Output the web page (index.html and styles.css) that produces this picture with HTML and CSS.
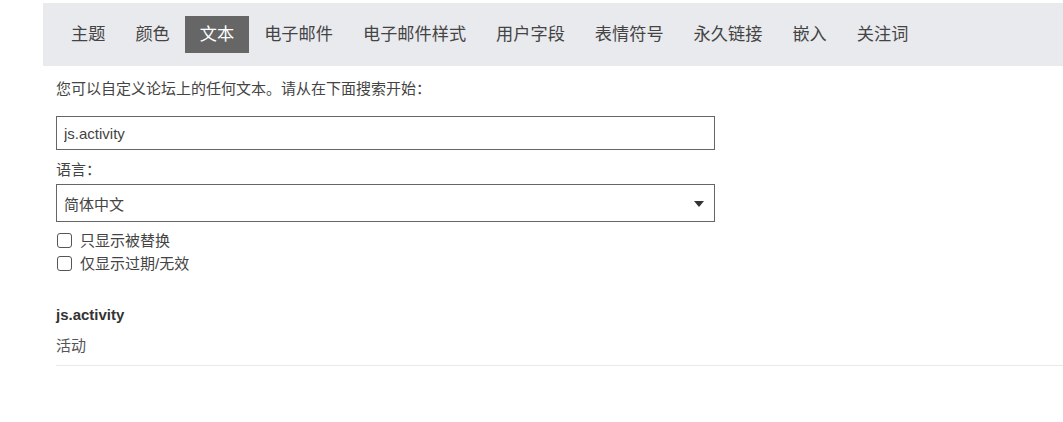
FILE: index.html
```html
<!DOCTYPE html>
<html lang="zh-CN">
<head>
<meta charset="utf-8">
<title>文本</title>
<link rel="stylesheet" href="styles.css">
</head>
<body>
<div class="page">
  <nav class="nav">
    <a class="tab">主题</a>
    <a class="tab">颜色</a>
    <a class="tab active">文本</a>
    <a class="tab">电子邮件</a>
    <a class="tab">电子邮件样式</a>
    <a class="tab">用户字段</a>
    <a class="tab">表情符号</a>
    <a class="tab">永久链接</a>
    <a class="tab">嵌入</a>
    <a class="tab">关注词</a>
  </nav>
  <main class="content">
    <p class="intro">您可以自定义论坛上的任何文本。请从在下面搜索开始：</p>
    <input class="search" type="text" value="js.activity">
    <label class="field-label">语言：</label>
    <div class="select-wrap">
      <div class="select">简体中文</div>
      <svg class="caret" width="10" height="6" viewBox="0 0 10 6"><path d="M0 0H10L5 6Z" fill="#333"/></svg>
    </div>
    <div class="checks">
      <label class="check"><input type="checkbox" class="box"><span>只显示被替换</span></label>
      <label class="check"><input type="checkbox" class="box"><span>仅显示过期/无效</span></label>
    </div>
    <div class="result">
      <h3 class="key">js.activity</h3>
      <div class="value">活动</div>
    </div>
  </main>
</div>
</body>
</html>
```
FILE: styles.css
```css
* { box-sizing: border-box; }
body {
  margin: 0;
  background: #fff;
  font-family: "Liberation Sans", "Noto Sans CJK SC", sans-serif;
  color: #333;
}
.page {
  padding: 3px 0 0 43px;
}
.nav {
  display: flex;
  background: #e9eaee;
  padding: 13px 13px;
}
.tab {
  font-size: 17.2px;
  line-height: 25px;
  padding: 6px 15px;
  color: #444;
  white-space: nowrap;
}
.tab.active {
  background: #666;
  color: #fff;
}
.content {
  padding: 13px 0 0 13px;
  display: flex;
  flex-direction: column;
  align-items: flex-start;
}
.intro {
  margin: 0;
  font-size: 15px;
  line-height: 20px;
  color: #444;
}
.search {
  margin-top: 17px;
  width: 659px;
  height: 34px;
  border: 1px solid #666;
  border-radius: 0;
  padding: 0 7px;
  font-family: "Liberation Sans", "Noto Sans CJK SC", sans-serif;
  font-size: 15px;
  color: #444;
  outline: none;
}
.field-label {
  margin-top: 10px;
  font-size: 15px;
  line-height: 20px;
  color: #444;
}
.select-wrap {
  position: relative;
  margin-top: 4px;
  width: 659px;
}
.select {
  height: 38px;
  border: 1px solid #666;
  padding: 0 7px;
  display: flex;
  align-items: center;
  font-size: 15px;
  color: #444;
}
.caret {
  position: absolute;
  right: 11px;
  top: 17px;
}
.checks {
  margin-top: 7px;
  display: flex;
  flex-direction: column;
}
.check {
  display: flex;
  align-items: center;
  gap: 8px;
  font-size: 15px;
  line-height: 23px;
  color: #444;
  margin-left: 1px;
}
.box {
  appearance: none;
  -webkit-appearance: none;
  margin: 0;
  width: 15px;
  height: 15px;
  border: 1px solid #555;
  border-radius: 3px;
  background: #fff;
}
.result {
  margin-top: 30px;
  align-self: stretch;
  border-bottom: 1px solid #e9e9e9;
  padding-bottom: 9px;
}
.key {
  margin: 0;
  font-size: 15px;
  line-height: 20px;
  font-weight: bold;
  color: #333;
}
.value {
  margin-top: 11px;
  font-size: 15px;
  line-height: 20px;
  color: #555;
}
```
